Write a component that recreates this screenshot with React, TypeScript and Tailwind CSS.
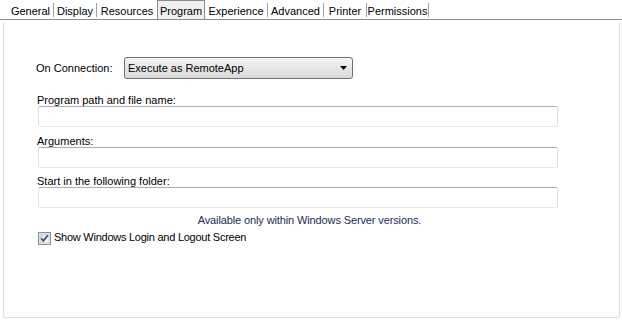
import React from 'react';

const tabs = [
    { label: 'General', w: 'w-[46px]', sep: true },
    { label: 'Display', w: 'w-[43px]', sep: true },
    { label: 'Resources', w: 'w-[60px]', sep: false },
    { label: 'Program', w: 'w-[48px]', sep: false, active: true },
    { label: 'Experience', w: 'w-[63px]', sep: true },
    { label: 'Advanced', w: 'w-[56px]', sep: true },
    { label: 'Printer', w: 'w-[43px]', sep: true },
    { label: 'Permissions', w: 'w-[62px]', sep: true },
];

const TextBox = () => (
    <div className="ml-[2px] w-[520px] h-[21px] bg-white border border-[#dbdfe6] border-t-[#abadb3] border-b-[#e3e9ef] rounded-[2px]" />
);

const CheckBox = () => (
    <svg width="13" height="13" viewBox="0 0 13 13" className="shrink-0">
        <defs>
            <linearGradient id="cbg" x1="0" y1="0" x2="1" y2="1">
                <stop offset="0" stopColor="#d8dbe0" />
                <stop offset="1" stopColor="#fbfbfb" />
            </linearGradient>
        </defs>
        <rect x="0.5" y="0.5" width="12" height="12" fill="#f4f4f4" stroke="#8e8f8f" />
        <rect x="2" y="2" width="9" height="9" fill="url(#cbg)" stroke="#b0b4bb" strokeWidth="0.6" />
        <path d="M3.2 6.4 L5.4 8.9 L9.8 3.3" fill="none" stroke="#3d5185" strokeWidth="1.8" />
    </svg>
);

export default function App() {
    return (
        <div className="w-[622px] h-[321px] bg-white text-[11px] text-black font-['Liberation_Sans',Arial,sans-serif] overflow-hidden">
            {/* tab strip */}
            <div className="h-[20px] border-b border-[#898c95] flex pl-[8px]">
                {tabs.map((t) =>
                    t.active ? (
                        <div
                            key={t.label}
                            className={`${t.w} h-[19px] bg-[#f0f0f0] border border-b-0 border-[#898c95] flex justify-center pt-[4px] leading-[12px]`}
                        >
                            {t.label}
                        </div>
                    ) : (
                        <div key={t.label} className={`${t.w} h-[19px] flex items-start`}>
                            <span className="flex-1 text-center pt-[5px] leading-[12px]">{t.label}</span>
                            {t.sep && <span className="w-px h-[14px] mt-[3px] bg-[#a0a0a0]" />}
                        </div>
                    )
                )}
            </div>

            {/* program page */}
            <div className="mt-[2px] ml-[3px] w-[617px] h-[296px] border-x border-b border-[#d5dfe5] rounded-b-[3px] pt-[35px] pl-[32px] flex flex-col">
                <div className="flex items-center h-[22px]">
                    <span className="w-[88px] leading-[12px]">On Connection:</span>
                    <div className="w-[229px] h-[22px] border border-[#707070] rounded-[3px] bg-gradient-to-b from-[#f4f4f4] to-[#d9d9d9] flex items-center pl-[3px] pr-[5px]">
                        <span className="flex-1 leading-[12px]">Execute as RemoteApp</span>
                        <svg width="7" height="4" viewBox="0 0 7 4">
                            <path d="M0 0 H7 L3.5 4 Z" fill="#000" />
                        </svg>
                    </div>
                </div>

                <div className="mt-[15px] ml-[1px] h-[12px] leading-[12px]">Program path and file name:</div>
                <TextBox />

                <div className="mt-[8px] ml-[1px] h-[12px] leading-[12px]">Arguments:</div>
                <TextBox />

                <div className="mt-[7px] ml-[1px] h-[12px] leading-[12px]">Start in the following folder:</div>
                <TextBox />

                <div className="mt-[6px] -ml-[36px] h-[12px] leading-[12px] text-center tracking-[-0.12px] text-[#1b2a5c]">
                    Available only within Windows Server versions.
                </div>

                <div className="mt-[6px] ml-[2px] flex items-start gap-[3px]">
                    <CheckBox />
                    <span className="leading-[12px] -mt-[1px] tracking-[-0.25px]">Show Windows Login and Logout Screen</span>
                </div>
            </div>
        </div>
    );
}
